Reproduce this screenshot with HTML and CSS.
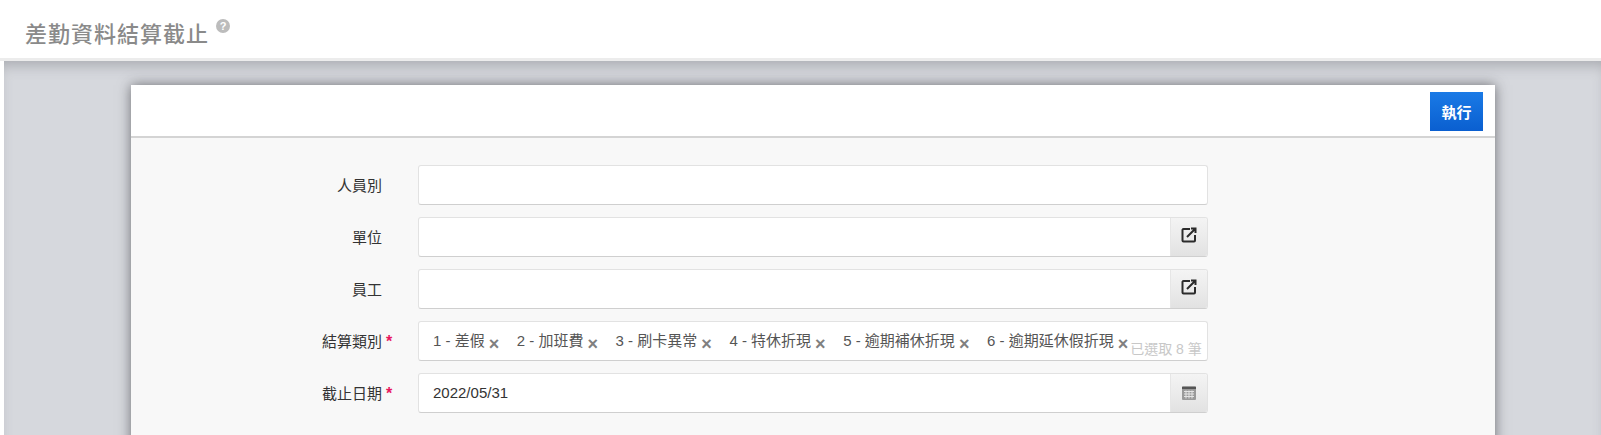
FILE: index.html
```html
<!DOCTYPE html>
<html lang="zh-Hant">
<head>
    <meta charset="UTF-8">
    <meta name="viewport" content="width=device-width, initial-scale=1.0">
    <title>差勤資料結算截止</title>
    <link rel="stylesheet" href="styles.css">
</head>
<body>
    <header class="page-header">
        <h1 class="page-title">差勤資料結算截止</h1>
        <span class="help-icon">?</span>
    </header>

    <main class="page-main">
        <section class="card">
            <div class="toolbar">
                <button class="run-button">執行</button>
            </div>

            <form class="form">
                <label class="form-label">人員別</label>
                <div class="field"></div>

                <label class="form-label">單位</label>
                <div class="field">
                    <span class="field-addon">
                        <svg class="icon" viewBox="0 0 16 16" fill="none" stroke="#2b2b2b" stroke-width="2">
                            <path d="M9 2H2.500A1 1 0 0 0 1.500 3v10.500a1 1 0 0 0 1 1H13a1 1 0 0 0 1-1V8"/>
                            <path d="M6 10L14 2M10 1.500h4.500V6"/>
                        </svg>
                    </span>
                </div>

                <label class="form-label">員工</label>
                <div class="field">
                    <span class="field-addon">
                        <svg class="icon" viewBox="0 0 16 16" fill="none" stroke="#2b2b2b" stroke-width="2">
                            <path d="M9 2H2.500A1 1 0 0 0 1.500 3v10.500a1 1 0 0 0 1 1H13a1 1 0 0 0 1-1V8"/>
                            <path d="M6 10L14 2M10 1.500h4.500V6"/>
                        </svg>
                    </span>
                </div>

                <label class="form-label required">結算類別<span class="star">*</span></label>
                <div class="field tag-field">
                    <span class="tag">1 - 差假<span class="tag-x">×</span></span>
                    <span class="tag">2 - 加班費<span class="tag-x">×</span></span>
                    <span class="tag">3 - 刷卡異常<span class="tag-x">×</span></span>
                    <span class="tag">4 - 特休折現<span class="tag-x">×</span></span>
                    <span class="tag">5 - 逾期補休折現<span class="tag-x">×</span></span>
                    <span class="tag">6 - 逾期延休假折現<span class="tag-x">×</span></span>
                    <span class="tag-count">已選取 8 筆</span>
                </div>

                <label class="form-label required">截止日期<span class="star">*</span></label>
                <div class="field">
                    <span class="field-value">2022/05/31</span>
                    <span class="field-addon">
                        <svg class="icon icon-calendar" viewBox="0 0 16 16">
                            <rect x="1" y="1" width="14" height="14" rx="1" fill="#9a9a9a"/>
                            <rect x="1" y="2" width="14" height="2" fill="#555"/>
                            <path d="M3 6.500h10M3 9h10M3 11.500h10M5 5.500v8M8 5.500v8M11 5.500v8" stroke="#e4e4e4" stroke-width="1" fill="none"/>
                        </svg>
                    </span>
                </div>
            </form>
        </section>
    </main>
</body>
</html>
```

FILE: styles.css
```css
* {
    margin: 0;
    padding: 0;
    box-sizing: border-box;
}

html, body {
    height: 100%;
    overflow: hidden;
}

body {
    font-family: "Liberation Sans", "Noto Sans CJK TC", sans-serif;
    font-size: 15px;
    background: #fff;
    color: #333;
    display: flex;
    flex-direction: column;
}

.page-header {
    height: 61px;
    flex-shrink: 0;
    padding: 19px 0 0 25px;
    display: flex;
    align-items: flex-start;
    border-bottom: 3px solid #ececec;
}

.page-title {
    font-size: 22px;
    line-height: 31px;
    font-weight: 500;
    letter-spacing: 1px;
    color: #8a8a8a;
}

.help-icon {
    width: 14px;
    height: 14px;
    margin-left: 7px;
    border-radius: 50%;
    background: #bcbcbc;
    color: #fff;
    font-size: 11px;
    font-weight: 700;
    line-height: 14px;
    text-align: center;
}

.page-main {
    flex: 1;
    margin-left: 4px;
    padding: 24px 106px 0 127px;
    background: #d6d8dd;
    box-shadow: inset 0 10px 14px -6px rgba(110, 112, 120, 0.45);
    overflow: hidden;
}

.card {
    height: 500px;
    background: #f8f8f8;
    box-shadow: 0 0 12px rgba(40, 40, 45, 0.6);
}

.toolbar {
    height: 53px;
    padding: 7px 12px 0 0;
    display: flex;
    justify-content: flex-end;
    background: #fff;
    border-bottom: 2px solid #d4d4d4;
}

.run-button {
    width: 53px;
    height: 39px;
    border: none;
    background: linear-gradient(#1a7ae6, #0a5fd0);
    color: #fff;
    font-family: inherit;
    font-size: 15px;
    font-weight: 700;
}

.form {
    padding-top: 27px;
    display: grid;
    grid-template-columns: 287px 790px;
    grid-auto-rows: 40px;
    row-gap: 12px;
}

.form-label {
    padding: 0 36px 2px 0;
    display: flex;
    align-items: center;
    justify-content: flex-end;
    color: #333;
}

.form-label.required {
    padding-right: 24px;
}

.star {
    width: 12px;
    padding-left: 4px;
    margin-top: 4px;
    color: #e8175d;
    font-size: 16px;
    font-weight: 700;
}

.field {
    display: flex;
    align-items: center;
    background: #fff;
    border: 1px solid #e2e2e2;
    border-bottom-color: #cfcfcf;
    border-radius: 3px;
    overflow: hidden;
}

.field-value {
    flex: 1;
    padding: 0 0 1px 14px;
}

.field-addon {
    width: 37px;
    height: 100%;
    margin-left: auto;
    display: flex;
    align-items: center;
    justify-content: center;
    background: linear-gradient(#f4f4f4, #e2e2e2);
    border-left: 1px solid #e6e6e6;
}

.icon {
    width: 16px;
    height: 16px;
    margin-bottom: 4px;
}

.icon-calendar {
    margin-bottom: 0;
}

.tag-field {
    padding-left: 14px;
}

.tag {
    display: inline-flex;
    align-items: flex-start;
    height: 100%;
    padding-top: 7px;
    margin-right: 17.6px;
    white-space: nowrap;
    color: #555;
}

.tag:nth-last-child(2) {
    margin-right: 2px;
}

.tag-x {
    margin: 6px 0 0 4px;
    color: #808080;
    font-size: 18px;
    font-weight: 700;
    line-height: 1;
}

.tag-count {
    align-self: flex-end;
    margin-bottom: 2px;
    font-size: 14px;
    color: #c8c8c8;
    white-space: nowrap;
}
```
